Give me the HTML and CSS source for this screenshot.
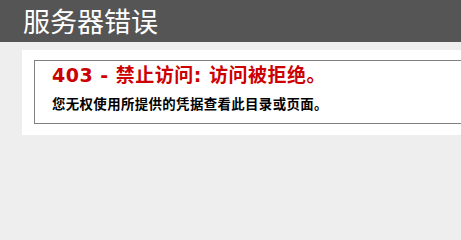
FILE: index.html
```
<!DOCTYPE html>
<html lang="zh-CN">
<head>
<meta charset="utf-8">
<title>服务器错误</title>
<link rel="stylesheet" href="styles.css">
</head>
<body>
<div class="header"><h1>服务器错误</h1></div>
<div class="content">
  <div class="content-container">
    <fieldset class="box">
      <h2>403 - 禁止访问: 访问被拒绝。</h2>
      <h3>您无权使用所提供的凭据查看此目录或页面。</h3>
    </fieldset>
  </div>
</div>
</body>
</html>
```

FILE: styles.css
```
html, body { margin: 0; padding: 0; }
body {
  font-size: 11.2px;
  font-family: "DejaVu Sans", Verdana, "Noto Sans CJK SC", sans-serif;
  background: #eeeeee;
  overflow: hidden;
}
.header {
  height: 30px;
  padding: 6px 0 6px 23px;
  background: #555555;
  color: #fff;
  font-family: "Noto Sans CJK SC", sans-serif;
}
.header h1 {
  margin: 0;
  font-size: 27px;
  font-weight: normal;
  line-height: 30px;
}
.content {
  padding-left: 22px;
  overflow: hidden;
}
.content-container {
  margin-top: 8px;
  margin-right: -40px;
  background: #fff;
  padding: 10px 0 11px 10px;
}
.box {
  margin: 0 0 0 2px;
  padding: 0 15px 10px 17px;
  border: 1px solid #808080;
  border-right: none;
  height: 52px;
}
.box h2 {
  margin: 3px 0 0 0;
  font-size: 19px;
  line-height: 22px;
  color: #cc0000;
  font-weight: bold;
  letter-spacing: 0.5px;
}
.box h3 {
  margin: 9px 0 0 0;
  font-size: 13.4px;
  line-height: 16px;
  color: #000;
  font-weight: bold;
  font-family: "Noto Sans CJK SC", sans-serif;
  letter-spacing: 0.4px;
}
```
